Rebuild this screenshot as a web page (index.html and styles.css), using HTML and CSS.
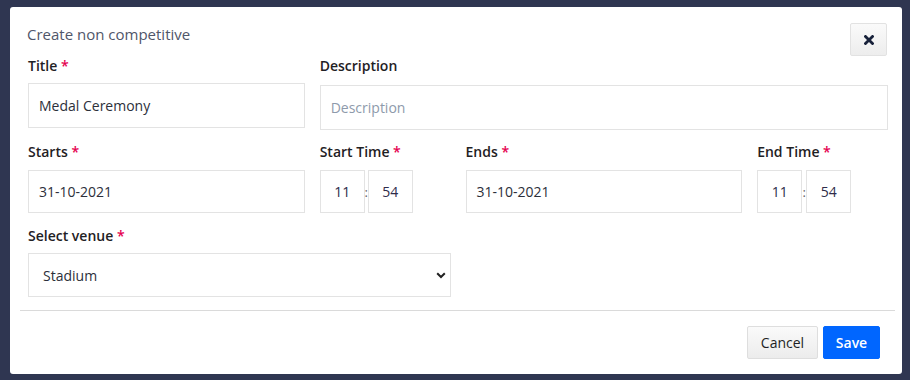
FILE: index.html
```html
<!DOCTYPE html>
<html lang="en">
<head>
<meta charset="utf-8">
<title>Create non competitive</title>
<link rel="stylesheet" href="styles.css">
</head>
<body>
<div class="modal">
  <div class="modal-header">
    <h5 class="modal-title">Create non competitive</h5>
    <button class="btn-close" type="button" aria-label="Close">
      <svg width="10" height="10" viewBox="0 0 10 10"><path d="M1.5 1.5 L8.5 8.5 M8.5 1.5 L1.5 8.5" stroke="#17213a" stroke-width="2.8" stroke-linecap="square"/></svg>
    </button>
  </div>
  <div class="modal-body">
    <div class="grid row-1">
      <div class="field span-4">
        <label class="label">Title <span class="req">*</span></label>
        <div class="input h45">Medal Ceremony</div>
      </div>
      <div class="field span-8">
        <label class="label">Description</label>
        <div class="input h45 placeholder shift">Description</div>
      </div>
    </div>
    <div class="grid row-2">
      <div class="field span-4">
        <label class="label">Starts <span class="req">*</span></label>
        <div class="input h43">31-10-2021</div>
      </div>
      <div class="field span-2">
        <label class="label">Start Time <span class="req">*</span></label>
        <div class="time">
          <div class="time-box">11</div>
          <span class="colon">:</span>
          <div class="time-box">54</div>
        </div>
      </div>
      <div class="field span-4">
        <label class="label">Ends <span class="req">*</span></label>
        <div class="input h43">31-10-2021</div>
      </div>
      <div class="field span-2">
        <label class="label">End Time <span class="req">*</span></label>
        <div class="time">
          <div class="time-box">11</div>
          <span class="colon wide">:</span>
          <div class="time-box">54</div>
        </div>
      </div>
    </div>
    <div class="grid row-3">
      <div class="field span-6">
        <label class="label">Select venue <span class="req">*</span></label>
        <div class="select">
          <span>Stadium</span>
          <svg width="10" height="7" viewBox="0 0 10 7"><path d="M1.2 1.2 L5 5 L8.8 1.2" fill="none" stroke="#222" stroke-width="2"/></svg>
        </div>
      </div>
    </div>
  </div>
  <div class="divider"></div>
  <div class="modal-footer">
    <button class="btn btn-light" type="button">Cancel</button>
    <button class="btn btn-primary" type="button">Save</button>
  </div>
</div>
</body>
</html>
```
FILE: styles.css
```css
* { box-sizing: border-box; }
html, body { margin: 0; padding: 0; }
body {
  background: #2f3651;
  font-family: "Open Sans", "Noto Sans", sans-serif;
  width: 910px;
  height: 380px;
  overflow: hidden;
  padding-top: 7px;
  padding-left: 10px;
}
.modal {
  width: 892px;
  height: 367px;
  background: #fff;
  border-radius: 3px;
  display: flex;
  flex-direction: column;
}
.modal-header {
  display: flex;
  justify-content: space-between;
  align-items: flex-start;
  padding: 16px 15px 0 17px;
  height: 49px;
}
.modal-title {
  margin: 0;
  font-size: 15px;
  font-weight: 400;
  line-height: 22px;
  color: #50566a;
}
.btn-close {
  width: 37px;
  height: 33px;
  border: 1px solid #e2e2e2;
  border-radius: 2px;
  background: linear-gradient(#fafafa, #ededed);
  display: flex;
  align-items: center;
  justify-content: center;
  padding: 0;
}
.modal-body {
  padding: 0 14px 0 18px;
}
.grid {
  display: grid;
  grid-template-columns: repeat(12, 1fr);
  column-gap: 15px;
  align-items: start;
}
.row-1 { margin-bottom: 14px; }
.row-2 { margin-bottom: 13px; }
.span-2 { grid-column: span 2; }
.span-4 { grid-column: span 4; }
.span-6 { grid-column: span 6; }
.span-8 { grid-column: span 8; }
.label {
  display: block;
  font-size: 14px;
  font-weight: 600;
  line-height: 20px;
  color: #1f2124;
  margin-bottom: 7px;
}
.row-2 .label { margin-bottom: 8px; }
.req { color: #e5004f; }
.input {
  border: 1px solid #e3e3e3;
  background: #fff;
  padding: 0 10px;
  font-size: 14px;
  color: #2c2f3a;
  display: flex;
  align-items: center;
}
.h45 { height: 45px; }
.h43 { height: 43px; }
.shift { margin-top: 9px; margin-bottom: -2px; }
.placeholder { color: #8e9aab; }
.time {
  display: flex;
  align-items: center;
}
.time-box {
  width: 45px;
  height: 43px;
  border: 1px solid #e3e3e3;
  display: flex;
  align-items: center;
  justify-content: center;
  font-size: 14px;
  color: #2f2c4a;
}
.colon {
  width: 3px;
  font-size: 13px;
  color: #666;
  display: flex;
  justify-content: center;
}
.colon.wide { width: 4px; }
.select {
  height: 44px;
  border: 1px solid #e3e3e3;
  display: flex;
  align-items: center;
  justify-content: space-between;
  padding: 0 4px 0 14px;
  font-size: 14px;
  color: #2c2f3a;
}
.divider {
  height: 1px;
  background: #dadada;
  margin: 13px 7px 0 10px;
}
.modal-footer {
  display: flex;
  justify-content: flex-end;
  gap: 5px;
  padding: 15px 22px 0 0;
}
.btn {
  height: 33px;
  font-family: inherit;
  font-size: 14px;
  border-radius: 2px;
  padding: 0;
  line-height: 31px;
}
.btn-light {
  width: 71px;
  background: linear-gradient(#fafafa, #ececec);
  border: 1px solid #dedede;
  color: #1d1f24;
}
.btn-primary {
  width: 57px;
  background: #0066ff;
  border: 1px solid #0066ff;
  color: #fff;
  font-weight: 600;
}
```
